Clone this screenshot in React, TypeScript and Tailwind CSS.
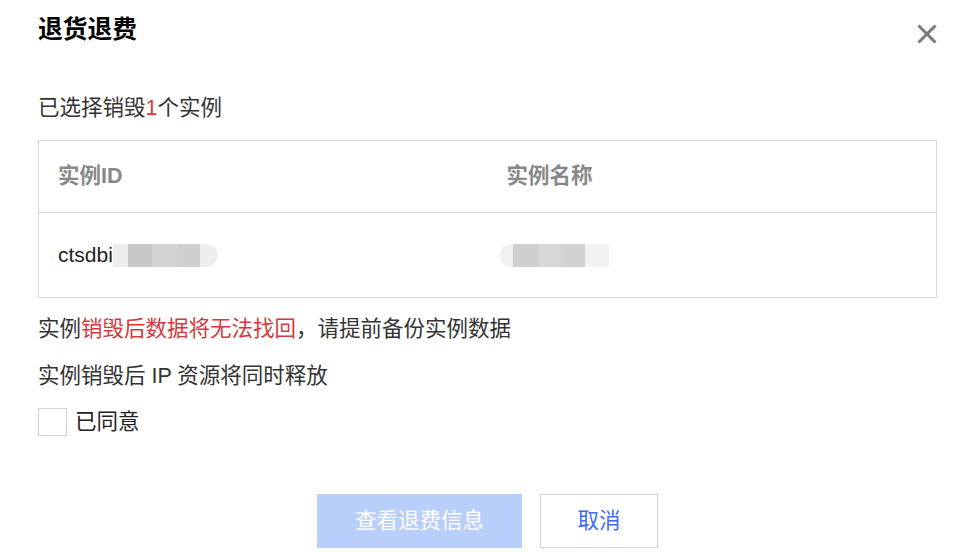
import React from 'react';

const FONT = '"Liberation Sans", "Noto Sans CJK SC", sans-serif';

// 打码块：模拟截图里被模糊处理的实例信息
function Blur({ cells }: { cells: { w: number; c: string; round?: 'l' | 'r' }[] }) {
  return (
    <div className="flex h-[23px]">
      {cells.map((cell, i) => (
        <div
          key={i}
          className={
            cell.round === 'l' ? 'h-full rounded-l-full' : cell.round === 'r' ? 'h-full rounded-r-full' : 'h-full'
          }
          style={{ width: cell.w, background: cell.c }}
        />
      ))}
    </div>
  );
}

export default function App() {
  return (
    <div className="h-[552px] w-[979px] bg-white text-[21.5px] text-[#333]" style={{ fontFamily: FONT }}>
      <div className="pl-[38px] pr-[42px] pt-[14px]">
        {/* 标题 */}
        <div className="flex items-center justify-between">
          <h1 className="text-[24.75px] font-bold leading-[32px] text-black">退货退费</h1>
          <button className="mt-[8px] flex h-[20px] w-[20px] items-center justify-center">
            <svg width="20" height="20" viewBox="0 0 20 20">
              <path d="M1.5 1.5L18.5 18.5M18.5 1.5L1.5 18.5" stroke="#7a7a7a" strokeWidth="3" />
            </svg>
          </button>
        </div>

        <p className="mt-[48px] leading-[28px]">
          已选择销毁<span className="text-[#d43a3c]">1</span>个实例
        </p>

        {/* 实例表格 */}
        <div className="mt-[18px] border border-[#d6d8e0]">
          <div className="grid h-[72px] grid-cols-2 items-center border-b border-[#d6d8e0] font-bold text-[#888]">
            <div className="pl-[19px]">实例ID</div>
            <div className="pl-[19px]">实例名称</div>
          </div>
          <div className="grid h-[84px] grid-cols-2 items-center">
            <div className="flex items-center pl-[19px]">
              <span className="text-[21px] text-[#222]">ctsdbi</span>
              <Blur
                cells={[
                  { w: 15, c: '#ededed' },
                  { w: 24, c: '#c8c8c8' },
                  { w: 25, c: '#d4d4d4' },
                  { w: 23, c: '#cfcfcf' },
                  { w: 18, c: '#eeeeee', round: 'r' },
                ]}
              />
            </div>
            <div className="flex items-center pl-[12px]">
              <Blur
                cells={[
                  { w: 13, c: '#f0f0f0', round: 'l' },
                  { w: 25, c: '#cfcfcf' },
                  { w: 23, c: '#d8d8d8' },
                  { w: 24, c: '#d1d1d1' },
                  { w: 24, c: '#f2f2f2' },
                ]}
              />
            </div>
          </div>
        </div>

        {/* 提示 */}
        <p className="mt-[17px] leading-[28px]">
          实例<span className="text-[#d43a3c]">销毁后数据将无法找回</span>，请提前备份实例数据
        </p>
        <p className="mt-[19px] leading-[28px]">实例销毁后 IP 资源将同时释放</p>

        <label className="mt-[18px] flex items-center gap-[8px]">
          <span className="h-[28px] w-[29px] border border-[#cfd2da] bg-white" />
          <span className="leading-[28px] text-[#222]">已同意</span>
        </label>
      </div>

      {/* 操作按钮 */}
      <div className="mt-[58px] flex justify-center gap-[18px] pr-[4px]">
        <button className="h-[54px] w-[205px] bg-[#b8cffb] text-white">查看退费信息</button>
        <button className="h-[54px] w-[118px] border border-[#d0d3e0] bg-white text-[#3f6cf2]">取消</button>
      </div>
    </div>
  );
}
